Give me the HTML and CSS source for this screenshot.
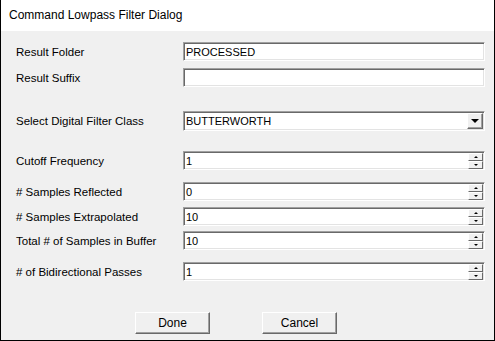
FILE: index.html
```html
<!DOCTYPE html>
<html>
  <head>
    <meta charset="utf-8">
    <title>Command Lowpass Filter Dialog</title>
    <link rel="stylesheet" href="styles.css">
  </head>
  <body>
    <div class="window">
      <div class="titlebar">Command Lowpass Filter Dialog</div>
      <div class="content">
        <div class="row">
          <label>Result Folder</label>
          <div class="field"><span class="value">PROCESSED</span></div>
        </div>
        <div class="row gap-7">
          <label>Result Suffix</label>
          <div class="field"><span class="value"></span></div>
        </div>
        <div class="row gap-24">
          <label>Select Digital Filter Class</label>
          <div class="field combo">
            <span class="value">BUTTERWORTH</span>
            <span class="drop"><i class="down big"></i></span>
          </div>
        </div>
        <div class="row gap-21">
          <label>Cutoff Frequency</label>
          <div class="field spin">
            <span class="value">1</span>
            <span class="arrows"><span class="btn"><i class="up"></i></span><span class="btn"><i class="down"></i></span></span>
          </div>
        </div>
        <div class="row gap-12">
          <label># Samples Reflected</label>
          <div class="field spin">
            <span class="value">0</span>
            <span class="arrows"><span class="btn"><i class="up"></i></span><span class="btn"><i class="down"></i></span></span>
          </div>
        </div>
        <div class="row gap-6">
          <label># Samples Extrapolated</label>
          <div class="field spin">
            <span class="value">10</span>
            <span class="arrows"><span class="btn"><i class="up"></i></span><span class="btn"><i class="down"></i></span></span>
          </div>
        </div>
        <div class="row gap-5">
          <label>Total # of Samples in Buffer</label>
          <div class="field spin">
            <span class="value">10</span>
            <span class="arrows"><span class="btn"><i class="up"></i></span><span class="btn"><i class="down"></i></span></span>
          </div>
        </div>
        <div class="row gap-12">
          <label># of Bidirectional Passes</label>
          <div class="field spin">
            <span class="value">1</span>
            <span class="arrows"><span class="btn"><i class="up"></i></span><span class="btn"><i class="down"></i></span></span>
          </div>
        </div>
        <div class="buttons">
          <button>Done</button>
          <button>Cancel</button>
        </div>
      </div>
    </div>
  </body>
</html>
```

FILE: styles.css
```css
html, body {
  margin: 0;
  padding: 0;
  background: #ffffff;
}
div.window {
  box-sizing: border-box;
  width: 495px;
  height: 341px;
  border-left: 1px solid #000000;
  border-right: 1px solid #000000;
  border-bottom: 1px solid #000000;
  background: #f0f0f0;
  font-family: "Liberation Sans", Arial, sans-serif;
  font-size: 11.5px;
  color: #000000;
}
div.titlebar {
  height: 31px;
  background: #ffffff;
  padding-left: 8px;
  font-family: "Liberation Sans", Arial, sans-serif;
  font-size: 12px;
  line-height: 31px;
}
div.content {
  padding: 11px 9px 0 15px;
}
div.row {
  display: flex;
  align-items: center;
  height: 19px;
}
div.row label {
  width: 167px;
  flex: none;
}
.gap-5 { margin-top: 5px; }
.gap-6 { margin-top: 6px; }
.gap-7 { margin-top: 7px; }
.gap-12 { margin-top: 12px; }
.gap-21 { margin-top: 21px; }
.gap-24 { margin-top: 24px; }

div.field {
  box-sizing: border-box;
  flex: 1;
  height: 19px;
  display: flex;
  align-items: center;
  background: #ffffff;
  border-top: 1px solid #a0a0a0;
  border-left: 1px solid #a0a0a0;
  border-right: 1px solid #ffffff;
  border-bottom: 1px solid #ffffff;
  box-shadow: inset 1px 1px 0 #696969, inset -1px -1px 0 #e3e3e3;
}
div.field .value {
  flex: 1;
  padding-left: 2px;
  font-size: 11px;
  white-space: nowrap;
}
div.combo {
  height: 20px;
}
span.drop {
  box-sizing: border-box;
  width: 16px;
  height: 16px;
  margin-right: 1px;
  display: flex;
  align-items: center;
  justify-content: center;
  background: #f0f0f0;
  border-top: 1px solid #ffffff;
  border-left: 1px solid #ffffff;
  border-right: 1px solid #696969;
  border-bottom: 1px solid #696969;
  box-shadow: inset -1px -1px 0 #a0a0a0;
}
span.arrows {
  display: flex;
  flex-direction: column;
  width: 15px;
  height: 16px;
  margin-right: 1px;
}
span.arrows .btn {
  box-sizing: border-box;
  height: 8px;
  display: flex;
  align-items: center;
  justify-content: center;
  background: #f0f0f0;
  border-top: 1px solid #ffffff;
  border-left: 1px solid #ffffff;
  border-right: 1px solid #696969;
  border-bottom: 1px solid #696969;
}
i.up, i.down {
  display: block;
  width: 0;
  height: 0;
  border-left: 2px solid transparent;
  border-right: 2px solid transparent;
}
i.up {
  border-bottom: 2px solid #000000;
}
i.down {
  border-top: 2px solid #000000;
}
i.down.big {
  border-left-width: 4px;
  border-right-width: 4px;
  border-top-width: 4px;
  margin-top: 1px;
}
div.buttons {
  display: flex;
  gap: 52px;
  margin-top: 31px;
  padding-left: 119px;
}
div.buttons button {
  box-sizing: border-box;
  width: 75px;
  height: 22px;
  padding: 0;
  font-family: "Liberation Sans", Arial, sans-serif;
  font-size: 12px;
  color: #000000;
  background: #f0f0f0;
  border-top: 1px solid #ffffff;
  border-left: 1px solid #ffffff;
  border-right: 1px solid #696969;
  border-bottom: 1px solid #696969;
  box-shadow: inset -1px -1px 0 #a0a0a0;
}
```
